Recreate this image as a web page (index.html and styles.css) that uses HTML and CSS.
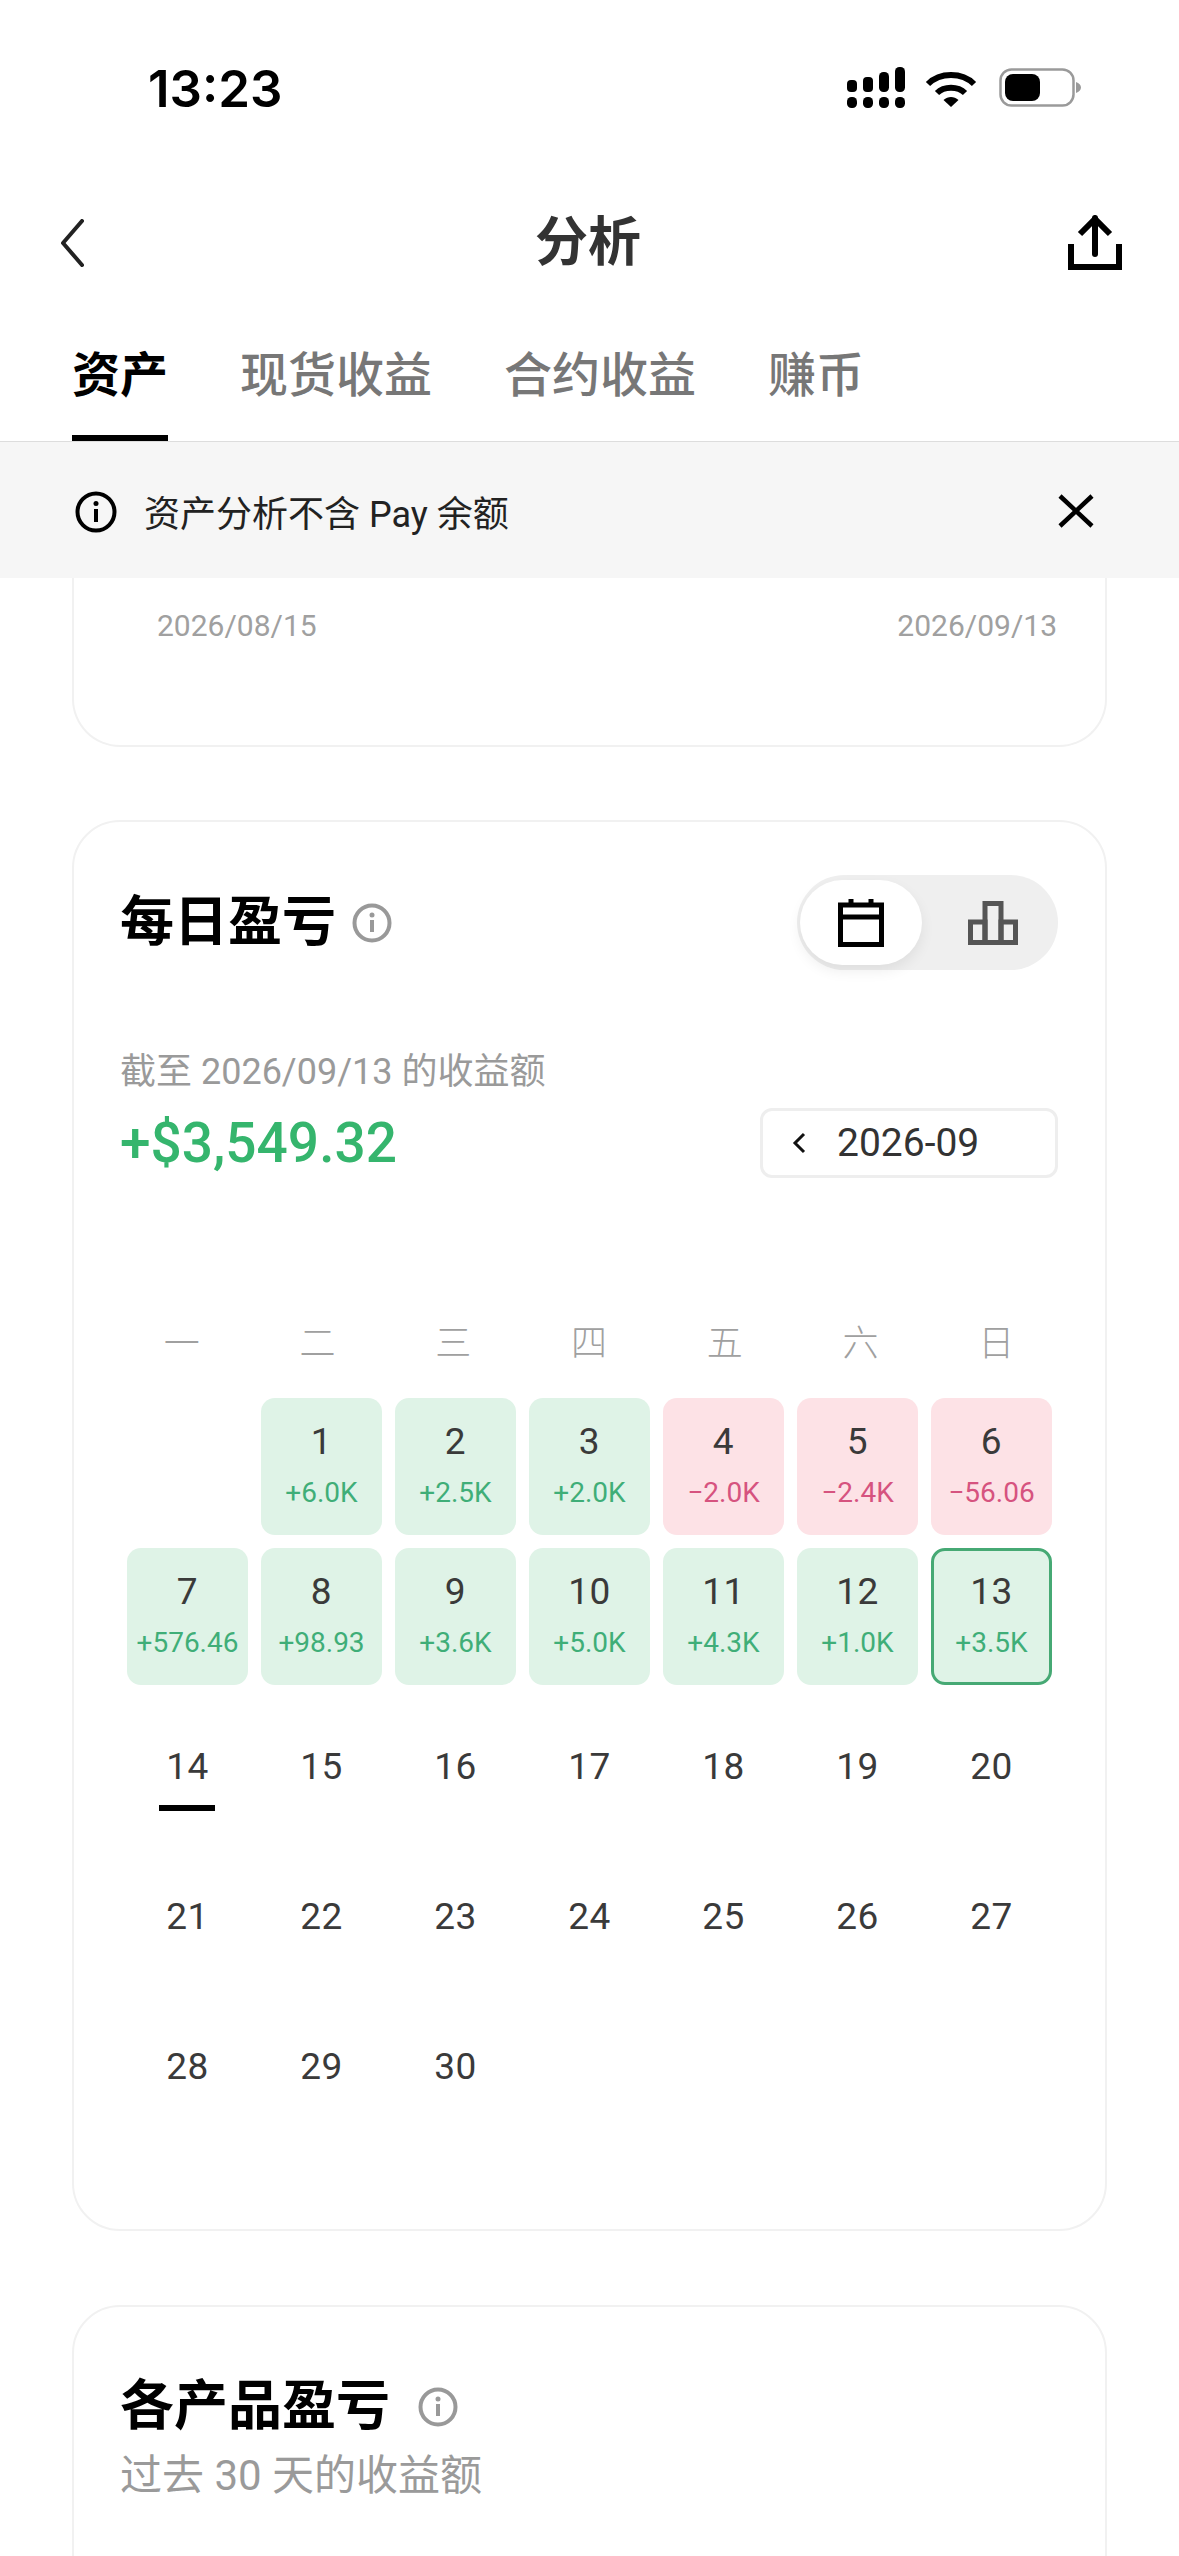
FILE: index.html
```html
<!DOCTYPE html>
<html lang="zh-CN">
<head>
<meta charset="utf-8">
<title>分析</title>
<link rel="stylesheet" href="styles.css">
</head>
<body>
<div class="page">
  <div class="status">
    <span class="time">13:23</span>
    <div class="status-icons">
      <svg class="sig" width="58" height="42" viewBox="0 0 58 42" fill="#000"><rect x="0" y="13" width="10" height="12" rx="4"/><rect x="16" y="10" width="10" height="15" rx="4"/><rect x="32" y="5" width="10" height="20" rx="4.5"/><rect x="48" y="0" width="10" height="25" rx="4.5"/><rect x="0" y="30" width="10" height="11" rx="4.5"/><rect x="16" y="30" width="10" height="11" rx="4.5"/><rect x="32" y="30" width="10" height="11" rx="4.5"/><rect x="48" y="30" width="10" height="11" rx="4.5"/></svg>
      <svg class="wifi" width="52" height="38" viewBox="0 0 52 38" fill="none" stroke="#000" stroke-width="6"><path d="M3 15 C15 3 37 3 49 15"/><path d="M12 24 C19 17 33 17 40 24"/><path d="M18.500 31 L26 38 L33.500 31 C29 27 23 27 18.500 31 Z" fill="#000" stroke="none"/></svg>
      <svg class="batt" width="82" height="40" viewBox="0 0 82 40"><rect x="1.500" y="1.500" width="73" height="36" rx="11" fill="#fff" stroke="#9a9a9a" stroke-width="2.500"/><rect x="6" y="6" width="35" height="27" rx="8" fill="#000"/><path d="M77 14 C80 15 82 17 82 19.500 C82 22 80 24 77 25 Z" fill="#9a9a9a"/></svg>
    </div>
  </div>

  <div class="nav">
    <svg class="back" width="24" height="48" viewBox="0 0 24 48" fill="none" stroke="#222" stroke-width="4" stroke-linecap="round" stroke-linejoin="round"><path d="M22 2 L3 24 L22 46"/></svg>
    <div class="nav-title">分析</div>
    <svg class="share" width="54" height="58" viewBox="0 0 54 58" fill="none" stroke="#000" stroke-width="6"><path d="M27 4 V40" stroke-linecap="round"/><path d="M12 20 L27 5 L42 20"/><path d="M3 30 V53 H51 V30"/></svg>
  </div>

  <div class="tabs">
    <div class="tab tab-on">资产</div>
    <div class="tab">现货收益</div>
    <div class="tab">合约收益</div>
    <div class="tab">赚币</div>
  </div>

  <div class="banner">
    <svg class="icon-info" width="42" height="42" viewBox="0 0 42 42" fill="none" stroke="#000" stroke-width="4"><circle cx="21" cy="21" r="18.500"/><path d="M21 18 V31" stroke-width="4"/><circle cx="21" cy="12.500" r="2.500" fill="#000" stroke="none"/></svg>
    <span class="banner-text">资产分析不含 Pay 余额</span>
    <svg class="close" width="36" height="34" viewBox="0 0 36 34" fill="none" stroke="#000" stroke-width="4.500"><path d="M2 2 L34 32 M34 2 L2 32"/></svg>
  </div>

  <div class="card card-clip">
    <div class="dates"><span>2026/08/15</span><span>2026/09/13</span></div>
  </div>

  <div class="card card-daily">
    <div class="daily-head">
      <div class="title-row">
        <h2 class="title">每日盈亏</h2>
        <svg width="40" height="40" viewBox="0 0 40 40" fill="none" stroke="#999" stroke-width="4"><circle cx="20" cy="20" r="17.500"/><path d="M20 17 V29"/><circle cx="20" cy="12" r="2.500" fill="#999" stroke="none"/></svg>
      </div>
      <div class="toggle">
        <div class="knob">
          <svg width="46" height="48" viewBox="0 0 46 48" fill="none" stroke="#000" stroke-width="5"><path d="M2.500 6 H43.500 V45.500 H2.500 Z"/><path d="M2.500 18 H43.500"/><path d="M13 0 V6 M33 0 V6"/></svg>
        </div>
        <svg class="bars" width="50" height="44" viewBox="0 0 50 44" fill="none" stroke="#555" stroke-width="5"><path d="M2.500 41.500 V21 H17 V41.500 Z"/><path d="M17 41.500 V2.500 H33 V41.500 Z"/><path d="M33 41.500 V21 H47.500 V41.500 Z"/><path d="M0 41.500 H50"/></svg>
      </div>
    </div>

    <div class="sub">截至 2026/09/13 的收益额</div>
    <div class="amount-row">
      <div class="amount">+$3,549.32</div>
      <div class="picker">
        <svg width="14" height="22" viewBox="0 0 14 22" fill="none" stroke="#111" stroke-width="3"><path d="M12 2 L3 11 L12 20"/></svg>
        <span class="picker-text">2026-09</span>
      </div>
    </div>

    <div class="weekdays">
      <span>一</span><span>二</span><span>三</span><span>四</span><span>五</span><span>六</span><span>日</span>
    </div>

    <div class="cal">
      <div class="day empty"></div>
      <div class="day up"><b>1</b><i>+6.0K</i></div>
      <div class="day up"><b>2</b><i>+2.5K</i></div>
      <div class="day up"><b>3</b><i>+2.0K</i></div>
      <div class="day down"><b>4</b><i>−2.0K</i></div>
      <div class="day down"><b>5</b><i>−2.4K</i></div>
      <div class="day down"><b>6</b><i>−56.06</i></div>
      <div class="day up"><b>7</b><i>+576.46</i></div>
      <div class="day up"><b>8</b><i>+98.93</i></div>
      <div class="day up"><b>9</b><i>+3.6K</i></div>
      <div class="day up"><b>10</b><i>+5.0K</i></div>
      <div class="day up"><b>11</b><i>+4.3K</i></div>
      <div class="day up"><b>12</b><i>+1.0K</i></div>
      <div class="day up sel"><b>13</b><i>+3.5K</i></div>
      <div class="day today"><b>14</b></div>
      <div class="day"><b>15</b></div>
      <div class="day"><b>16</b></div>
      <div class="day"><b>17</b></div>
      <div class="day"><b>18</b></div>
      <div class="day"><b>19</b></div>
      <div class="day"><b>20</b></div>
      <div class="day"><b>21</b></div>
      <div class="day"><b>22</b></div>
      <div class="day"><b>23</b></div>
      <div class="day"><b>24</b></div>
      <div class="day"><b>25</b></div>
      <div class="day"><b>26</b></div>
      <div class="day"><b>27</b></div>
      <div class="day"><b>28</b></div>
      <div class="day"><b>29</b></div>
      <div class="day"><b>30</b></div>
    </div>
  </div>

  <div class="card card-prod">
    <div class="title-row title-row-wide">
      <h2 class="title">各产品盈亏</h2>
      <svg width="40" height="40" viewBox="0 0 40 40" fill="none" stroke="#999" stroke-width="4"><circle cx="20" cy="20" r="17.500"/><path d="M20 17 V29"/><circle cx="20" cy="12" r="2.500" fill="#999" stroke="none"/></svg>
    </div>
    <div class="sub sub-big">过去 30 天的收益额</div>
  </div>
</div>
</body>
</html>
```
FILE: styles.css
```css
* { box-sizing: border-box; }
html, body { margin: 0; padding: 0; background: #fff; }
body { font-family: Roboto, "Noto Sans CJK SC", sans-serif; color: #333; }
.page { width: 1179px; height: 2556px; overflow: hidden; }

.status { height: 176px; display: flex; align-items: center; justify-content: space-between; padding: 0 98px 0 148px; }
.time { font-family: Inter, Roboto, sans-serif; font-weight: 600; font-size: 51px; letter-spacing: 0; color: #000; }
.status-icons { display: flex; align-items: center; }
.status-icons svg { display: block; }
.sig { margin-right: 20px; }
.wifi { margin-right: 22px; }

.nav { height: 100px; margin-top: 17px; padding: 0 60px 0 57px; display: grid; grid-template-columns: 1fr auto 1fr; align-items: center; }
.back { display: block; margin-left: 3px; }
.nav-title { font-size: 53px; line-height: 70px; font-weight: 700; color: #333; }
.share { display: block; justify-self: end; margin-top: -1px; margin-right: -3px; }

.tabs { display: flex; gap: 72px; padding: 48px 72px 0; border-bottom: 1px solid #ddd; }
.tab { height: 100px; font-size: 48px; line-height: 70px; font-weight: 500; color: #777; }
.tab-on { color: #000; font-weight: 700; border-bottom: 6px solid #000; }

.banner { height: 136px; background: #f6f6f6; display: flex; align-items: center; padding: 0 85px 0 75px; }
.banner .icon-info { display: block; margin-right: 27px; margin-top: 4px; }
.banner-text { flex: 1; font-size: 36px; margin-top: 2px; color: #222; }
.close { display: block; margin-top: 1px; }

.card { margin: 0 72px; background: #fff; border: 2px solid #f1f1f1; border-radius: 48px; }
.card-clip { height: 169px; border-top: none; border-top-left-radius: 0; border-top-right-radius: 0; padding: 28px 48px 0 83px; }
.dates { display: flex; justify-content: space-between; font-size: 30px; line-height: 40px; color: #a0a0a0; }

.card-daily { margin-top: 73px; padding: 53px 47px 94px 46px; }
.daily-head { display: flex; align-items: center; justify-content: space-between; }
.title-row { display: flex; align-items: center; gap: 16px; }
.title-row-wide { gap: 28px; }
.title { margin: 0; font-size: 54px; line-height: 70px; font-weight: 700; color: #000; }
.title-row svg { display: block; }

.toggle { width: 261px; height: 95px; border-radius: 48px; background: #efefef; display: flex; align-items: center; padding-left: 3px; }
.knob { width: 122px; height: 85px; border-radius: 43px; background: #fff; box-shadow: 0 6px 14px rgba(0, 0, 0, 0.07); display: flex; align-items: center; justify-content: center; }
.knob svg { display: block; }
.bars { display: block; margin-left: 46px; }

.sub { margin-top: 77px; font-size: 36px; line-height: 50px; color: #9a9a9a; }
.amount-row { margin-top: 11px; height: 70px; display: flex; align-items: center; justify-content: space-between; }
.amount { font-size: 55px; line-height: 70px; font-weight: 500; color: #35b56d; }
.picker { width: 298px; height: 70px; border: 3px solid #eee; border-radius: 12px; background: #fff; display: flex; align-items: center; padding-left: 29px; }
.picker svg { display: block; }
.picker-text { margin-left: 31px; font-size: 39px; font-weight: 400; color: #333; }

.weekdays { margin: 141px -6px 0 -6px; display: grid; grid-template-columns: repeat(7, 1fr); text-align: center; font-size: 36px; line-height: 50px; color: #a0a0a0; font-weight: 300; }

.cal { margin: 29px 6px 0 7px; display: grid; grid-template-columns: repeat(7, 1fr); grid-auto-rows: 137px; gap: 13px; }
.day { border-radius: 14px; display: flex; flex-direction: column; align-items: center; justify-content: center; }
.day b { font-size: 37px; line-height: 44px; font-weight: 400; letter-spacing: 0.5px; color: #3a3a3a; }
.day i { margin-top: 11px; font-style: normal; font-size: 28px; line-height: 36px; }
.up { background: #dff3e7; padding-bottom: 3px; }
.up i { color: #3fae78; }
.down { background: #fde2e6; padding-bottom: 3px; }
.down i { color: #d6537f; }
.sel { border: 3px solid #46a974; }
.empty { background: transparent; }
.today { position: relative; }
.today::after { content: ""; position: absolute; left: 32px; bottom: 24px; width: 56px; height: 6px; background: #000; }

.card-prod { margin-top: 74px; height: 400px; padding: 65px 48px 0 46px; }
.sub-big { margin-top: 4px; font-size: 42px; line-height: 60px; }
```
